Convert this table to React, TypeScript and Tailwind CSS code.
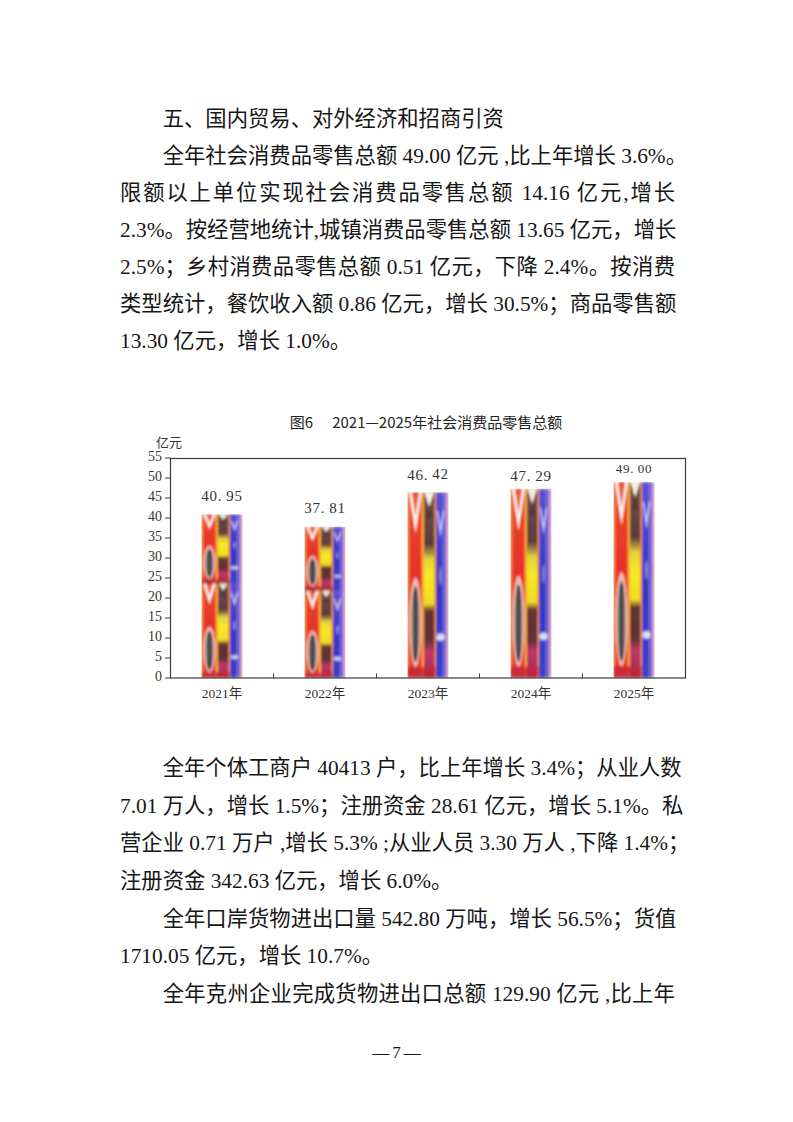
import React from "react";
import clsx from "clsx";

const SERIF = "Liberation Serif, Noto Sans CJK SC, serif";

const bars = [
  { year: "2021年", value: 40.95, label: "40.95", gap: 16.5, size: 15, split: true },
  { year: "2022年", value: 37.81, label: "37.81", gap: 17, size: 15, split: true },
  { year: "2023年", value: 46.42, label: "46.42", gap: 16, size: 15, split: false },
  { year: "2024年", value: 47.29, label: "47.29", gap: 11, size: 15, split: false },
  { year: "2025年", value: 49.0, label: "49.00", gap: 12, size: 13, split: false },
];

// chart geometry (svg coords)
const X0 = 30.5;
const CAT = 103;
const Y0 = 246;
const UNIT = 4;
const BAR_W = 41;

function Line({
  children,
  indent,
  justify,
}: {
  children: React.ReactNode;
  indent?: boolean;
  justify?: boolean;
}) {
  return (
    <div
      className={clsx(
        "whitespace-nowrap",
        indent && "pl-[42.67px]",
        justify && "text-justify [text-align-last:justify]"
      )}
    >
      {children}
    </div>
  );
}

/* one ikat tile drawn in a 41 x 100 box */
function IkatTile() {
  return (
    <g>
      <rect x={0} y={0} width={41} height={100} fill="#e8352b" />
      <rect x={0} y={0} width={16.5} height={100} fill="url(#redCol)" />
      <rect x={0} y={0} width={2} height={100} fill="#f28a3a" />
      <rect x={14} y={0} width={2.5} height={100} fill="#f7a531" />
      {/* white chevron on top */}
      <path d="M1.5 0 L8 22 L14.5 0 L11.5 0 L8 13 L4.5 0 Z" fill="#fdf3ef" />
      <path d="M5 2 L8 9 L11 2 Z" fill="#f06a4a" opacity={0.7} />
      {/* dark oval with soft rim */}
      <ellipse cx={8} cy={70} rx={6} ry={24} fill="#f3d6d0" opacity={0.85} />
      <ellipse cx={8} cy={71} rx={4.2} ry={20.5} fill="url(#oval)" />
      {/* middle column */}
      <rect x={16.5} y={0} width={10.5} height={100} fill="url(#midCol)" />
      <path d="M17 0 L21.7 8 L26.5 0 Z" fill="#f6efe4" />
      <path d="M18.5 14 L21.7 6 L25 14 Z" fill="#3e2a2a" opacity={0.5} />
      {/* right column */}
      <rect x={27} y={0} width={1.5} height={100} fill="#f29a30" />
      <rect x={28.5} y={0} width={12.5} height={100} fill="url(#blueCol)" />
      <rect x={35.5} y={0} width={1.5} height={100} fill="#8c7ed8" />
      <rect x={38.5} y={0} width={2.5} height={100} fill="#e9a8c8" />
      <path d="M29 10 L33 24 L37 10 L35.5 10 L33 18 L30.5 10 Z" fill="#ffffff" opacity={0.7} />
      <ellipse cx={33} cy={45} rx={1.6} ry={5} fill="#ffffff" opacity={0.35} />
      <ellipse cx={33} cy={78} rx={4.2} ry={1.8} fill="#ffffff" opacity={0.85} />
      {/* bottom band */}
      <rect x={0} y={94} width={28} height={6} fill="#c9283a" opacity={0.85} />
    </g>
  );
}

function IkatBar({ x, top, split, id }: { x: number; top: number; split: boolean; id: string }) {
  const h = Y0 - top;
  const h1 = split ? h * 0.42 : h;
  const h2 = h - h1;
  return (
    <g clipPath={`url(#${id})`}>
      <clipPath id={id}>
        <rect x={x} y={top} width={BAR_W} height={h} />
      </clipPath>
      <g filter="url(#soft)">
        <g transform={`translate(${x} ${top}) scale(1 ${h1 / 100})`}>
          <IkatTile />
        </g>
        {split && (
          <>
            <g transform={`translate(${x} ${top + h1}) scale(1 ${h2 / 100})`}>
              <IkatTile />
            </g>
            <rect x={x} y={top + h1 - 1} width={28} height={1.6} fill="#5a2424" opacity={0.8} />
          </>
        )}
      </g>
    </g>
  );
}

function Chart() {
  const ticks = Array.from({ length: 12 }, (_, i) => i * 5);
  return (
    <svg width={560} height={280} viewBox="0 0 560 280" className="block">
      <defs>
        <filter id="soft" x="-5%" y="-5%" width="110%" height="110%">
          <feGaussianBlur stdDeviation="0.8 1.6" />
        </filter>
        <linearGradient id="redCol" x1="0" y1="0" x2="0" y2="1">
          <stop offset="0%" stopColor="#ee4a2e" />
          <stop offset="45%" stopColor="#e5302a" />
          <stop offset="100%" stopColor="#e3332e" />
        </linearGradient>
        <linearGradient id="oval" x1="0" y1="0" x2="1" y2="0">
          <stop offset="0%" stopColor="#9a9492" />
          <stop offset="50%" stopColor="#3a3434" />
          <stop offset="100%" stopColor="#9a9492" />
        </linearGradient>
        <linearGradient id="midCol" x1="0" y1="0" x2="0" y2="1">
          <stop offset="0%" stopColor="#6e5250" />
          <stop offset="28%" stopColor="#5b3d3c" />
          <stop offset="36%" stopColor="#e6d23a" />
          <stop offset="45%" stopColor="#f6ea26" />
          <stop offset="60%" stopColor="#f0dc22" />
          <stop offset="64%" stopColor="#5c3636" />
          <stop offset="80%" stopColor="#62303a" />
          <stop offset="86%" stopColor="#c2356c" />
          <stop offset="93%" stopColor="#b03060" />
          <stop offset="100%" stopColor="#4a2a2a" />
        </linearGradient>
        <linearGradient id="blueCol" x1="0" y1="0" x2="0" y2="1">
          <stop offset="0%" stopColor="#5a52d8" />
          <stop offset="50%" stopColor="#3437c8" />
          <stop offset="100%" stopColor="#3b3fcc" />
        </linearGradient>
      </defs>

      <text x={16} y={12} fontSize={13} fill="#333" dominantBaseline="middle" fontFamily={SERIF}>
        亿元
      </text>

      {ticks.map((t) => (
        <g key={t}>
          <text
            x={22}
            y={Y0 - t * UNIT}
            fontSize={14}
            fill="#333"
            textAnchor="end"
            dominantBaseline="middle"
            fontFamily={SERIF}
          >
            {t}
          </text>
          <line x1={25} x2={X0} y1={Y0 - t * UNIT} y2={Y0 - t * UNIT} stroke="#333" strokeWidth={1} />
        </g>
      ))}

      {bars.map((b, i) => {
        const x = X0 + CAT * i + (CAT - BAR_W) / 2;
        const top = Y0 - b.value * UNIT;
        const [a, c] = b.label.split(".");
        return (
          <g key={b.year}>
            <IkatBar x={x} top={top} split={b.split} id={`bar${i}`} />
            <text
              x={x + BAR_W / 2}
              y={top - b.gap}
              fontSize={b.size}
              fill="#333"
              textAnchor="middle"
              dominantBaseline="middle"
              fontFamily={SERIF}
              letterSpacing={0.8}
            >
              {a}.<tspan dx={b.size * 0.25}>{c}</tspan>
            </text>
            <text
              x={x + BAR_W / 2}
              y={263}
              fontSize={13.5}
              fill="#333"
              textAnchor="middle"
              dominantBaseline="middle"
              fontFamily={SERIF}
            >
              {b.year}
            </text>
          </g>
        );
      })}

      {[1, 2, 3, 4].map((k) => (
        <line
          key={k}
          x1={X0 + CAT * k}
          x2={X0 + CAT * k}
          y1={Y0}
          y2={Y0 - 4.5}
          stroke="#333"
          strokeWidth={1}
        />
      ))}

      <rect x={X0} y={26.5} width={515} height={Y0 - 26.5} fill="none" stroke="#3a3a3a" strokeWidth={1.2} />
    </svg>
  );
}

export default function App() {
  return (
    <div className="w-[793px] h-[1122px] bg-white text-[#161616] font-['Liberation_Serif','Noto_Sans_CJK_SC',serif] overflow-hidden">
      {/* upper text */}
      <div className="pt-[100.5px] pl-[120px]">
        <div className="w-[555px] text-[21.33px] leading-[37px]">
          <Line indent>五、国内贸易、对外经济和招商引资</Line>
          <Line indent justify>
            全年社会消费品零售总额 49.00 亿元 ,比上年增长 3.6%。
          </Line>
          <Line justify>限额以上单位实现社会消费品零售总额 14.16 亿元,增长</Line>
          <Line justify>2.3%。按经营地统计,城镇消费品零售总额 13.65 亿元，增长</Line>
          <Line justify>2.5%；乡村消费品零售总额 0.51 亿元，下降 2.4%。按消费</Line>
          <Line justify>类型统计，餐饮收入额 0.86 亿元，增长 30.5%；商品零售额</Line>
          <Line>13.30 亿元，增长 1.0%。</Line>
        </div>
      </div>

      {/* chart */}
      <div className="mt-[52.5px] ml-[140px] w-[560px]">
        <div className="pl-[12px] flex justify-center h-[20px] items-center text-[15px] text-[#222] font-['Noto_Sans_CJK_SC',sans-serif]">
          <span>图6</span>
          <span className="ml-[19px]">2021—2025年社会消费品零售总额</span>
        </div>
        <Chart />
      </div>

      {/* lower text */}
      <div className="mt-[38.2px] pl-[120px]">
        <div className="w-[555px] text-[21.33px] leading-[37.6px]">
          <Line indent justify>
            全年个体工商户 40413 户，比上年增长 3.4%；从业人数
          </Line>
          <Line justify>7.01 万人，增长 1.5%；注册资金 28.61 亿元，增长 5.1%。私</Line>
          <Line justify>营企业 0.71 万户 ,增长 5.3% ;从业人员 3.30 万人 ,下降 1.4%；</Line>
          <Line>注册资金 342.63 亿元，增长 6.0%。</Line>
          <Line indent justify>
            全年口岸货物进出口量 542.80 万吨，增长 56.5%；货值
          </Line>
          <Line>1710.05 亿元，增长 10.7%。</Line>
          <Line indent justify>
            全年克州企业完成货物进出口总额 129.90 亿元 ,比上年
          </Line>
        </div>
      </div>

      {/* page number */}
      <div className="mt-[29.6px] h-[20px] flex items-center justify-center gap-[3px] text-[17px] leading-none">
        <span>—</span>
        <span>7</span>
        <span>—</span>
      </div>
    </div>
  );
}
